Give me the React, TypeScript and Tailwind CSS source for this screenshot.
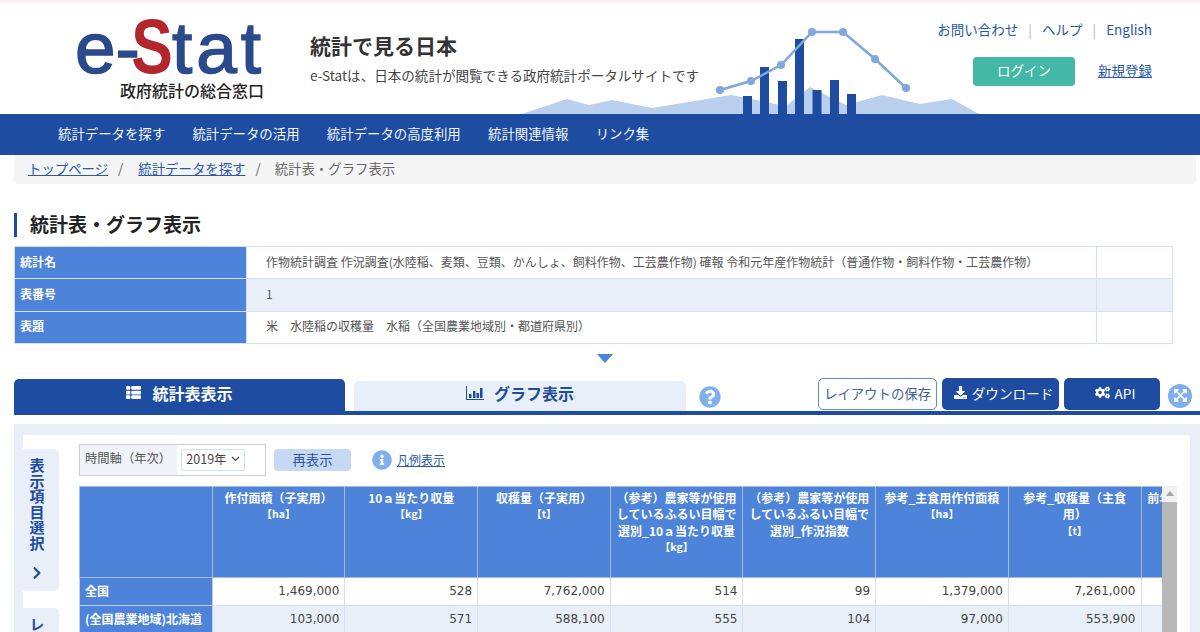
import { FaChevronRight, FaCogs, FaDownload, FaExpandArrowsAlt, FaInfoCircle, FaQuestionCircle, FaThList } from "react-icons/fa";

const headers = [
  { title: "", unit: "" },
  { title: "作付面積（子実用）", unit: "【ha】" },
  { title: "10ａ当たり収量", unit: "【kg】" },
  { title: "収穫量（子実用）", unit: "【t】" },
  { title: "（参考）農家等が使用しているふるい目幅で選別_10ａ当たり収量", unit: "【kg】" },
  { title: "（参考）農家等が使用しているふるい目幅で選別_作況指数", unit: "" },
  { title: "参考_主食用作付面積", unit: "【ha】" },
  { title: "参考_収穫量（主食用）", unit: "【t】" },
  { title: "前年産の収穫量（子実用）", unit: "" },
];

const rows = [
  { name: "全国", values: ["1,469,000", "528", "7,762,000", "514", "99", "1,379,000", "7,261,000", ""] },
  { name: "(全国農業地域)北海道", values: ["103,000", "571", "588,100", "555", "104", "97,000", "553,900", ""] },
];

const info = [
  { label: "統計名", value: "作物統計調査 作況調査(水陸稲、麦類、豆類、かんしょ、飼料作物、工芸農作物) 確報 令和元年産作物統計（普通作物・飼料作物・工芸農作物）" },
  { label: "表番号", value: "1" },
  { label: "表題", value: "米　水陸稲の収穫量　水稲（全国農業地域別・都道府県別）" },
];

const nav = ["統計データを探す", "統計データの活用", "統計データの高度利用", "統計関連情報", "リンク集"];

function HeaderChart() {
  const dots = [[720, 90], [751, 81], [781, 65], [812, 32], [843, 32], [875, 59], [906, 88]];
  const bars = [[743, 96], [760, 67], [778, 81], [795, 39], [812.5, 90], [830, 80], [847, 94]];
  return (
    <svg className="absolute left-0 top-0" width="1200" height="114" viewBox="0 0 1200 114">
      <polygon
        points="522,114 567,99 589,105 612,100 652,108 731,95 786,106 810,87 846,105 882,95 920,104 952,99 979,114"
        fill="#bacfee"
      />
      {bars.map(([x, y]) => (
        <rect key={x} x={x} y={y} width="9" height={114 - y} fill="#1e4ca1" />
      ))}
      <polyline points={dots.map((d) => d.join(",")).join(" ")} fill="none" stroke="#7ea8de" strokeWidth="2.5" />
      {dots.map(([x, y]) => (
        <circle key={x} cx={x} cy={y} r="4" fill="#7ea8de" />
      ))}
    </svg>
  );
}

function BarIcon() {
  return (
    <svg width="18" height="14" viewBox="0 0 18 14" fill="#1e4ca1">
      <rect x="0" y="0" width="1" height="14" />
      <rect x="0" y="13" width="18" height="1" />
      <rect x="3" y="8" width="2.5" height="4" />
      <rect x="7" y="5" width="2.5" height="7" />
      <rect x="10.5" y="7" width="2.5" height="5" />
      <rect x="14" y="2" width="2.5" height="10" />
    </svg>
  );
}

export default function App() {
  return (
    <div className="h-[632px] w-[1200px] overflow-hidden bg-white font-['Noto_Sans_CJK_JP',sans-serif] text-[#333]">
      <div className="h-[3px] bg-[#fdeef2]" />
      <header className="relative h-[111px]">
        <div className="absolute -top-[3px] left-0">
          <HeaderChart />
        </div>
        <div className="relative flex h-full">
          <div className="ml-[75px] w-[235px]">
            <div className="flex h-[75px] items-baseline font-['Liberation_Sans',sans-serif] leading-[86px]">
              <span className="text-[73px] text-[#2b4a8c] [-webkit-text-stroke:1.5px_#2b4a8c]">e-</span>
              <span className="ml-[-14px] inline-block scale-x-[0.8] text-[78px] font-bold text-[#b3262c]">S</span>
              <span className="ml-[-6px] text-[73px] tracking-[4px] text-[#2b4a8c] [-webkit-text-stroke:1.5px_#2b4a8c]">tat</span>
            </div>
            <p className="ml-[45px] whitespace-nowrap text-[16px] font-medium leading-[24px] text-[#222]">政府統計の総合窓口</p>
          </div>
          <div className="pt-[29px]">
            <h2 className="text-[21px] font-bold leading-[26px] text-[#333]">統計で見る日本</h2>
            <p className="mt-[7px] whitespace-nowrap text-[13.55px] leading-[20px] text-[#444]">e-Statは、日本の統計が閲覧できる政府統計ポータルサイトです</p>
          </div>
          <div className="ml-auto flex flex-col items-end pr-[48px] pt-[16px]">
            <div className="flex items-center text-[13.5px] leading-[20px] text-[#2a59a8]">
              <span>お問い合わせ</span>
              <span className="mx-[10px] text-[#b9b2a6]">|</span>
              <span>ヘルプ</span>
              <span className="mx-[10px] text-[#b9b2a6]">|</span>
              <span>English</span>
            </div>
            <div className="mt-[18px] flex items-center gap-[23px]">
              <button className="h-[29px] w-[102px] rounded-[4px] bg-[#43b8a6] pb-[2px] text-[13.5px] text-white">ログイン</button>
              <a className="pb-[2px] text-[13.5px] text-[#2a59a8] underline">新規登録</a>
            </div>
          </div>
        </div>
      </header>

      <nav className="flex h-[41px] items-center gap-[27.3px] bg-[#1e4ca1] pb-[3px] pl-[58px] text-[13.4px] text-[#f4f7fc]">
        {nav.map((item) => (
          <span key={item}>{item}</span>
        ))}
      </nav>

      <div className="mx-[14px] flex h-[29px] w-[1182px] items-center rounded-b-[4px] bg-[#f5f5f5] pb-[2px] pl-[14px] text-[13.4px]">
        <a className="text-[#2a59a8] underline">トップページ</a>
        <span className="mx-[10px] text-[#666]">/</span>
        <a className="ml-[5px] text-[#2a59a8] underline">統計データを探す</a>
        <span className="mx-[10px] text-[#666]">/</span>
        <span className="ml-[4px] text-[#666]">統計表・グラフ表示</span>
      </div>

      <h1 className="ml-[14px] mt-[29px] flex h-[24px] items-center border-l-[3px] border-[#1e4ca1] pb-[2px] pl-[13px] text-[19px] font-bold text-[#222]">
        統計表・グラフ表示
      </h1>

      <table className="ml-[14px] mt-[9px] w-[1159px] table-fixed border-collapse text-[12px]">
        <colgroup>
          <col className="w-[232px]" />
          <col className="w-[850px]" />
          <col />
        </colgroup>
        <tbody>
          {info.map((row, i) => (
            <tr key={row.label} className={`h-[32.3px] ${i === 1 ? "bg-[#e9eff8]" : "bg-white"}`}>
              <th className="border border-[#d6e0f2] bg-[#4d83d9] pb-[2px] pl-[5px] text-left font-bold text-white">{row.label}</th>
              <td className="border border-[#d6e0f2] pb-[2px] pl-[19px] text-[#555]">{row.value}</td>
              <td className="border border-[#d6e0f2]" />
            </tr>
          ))}
        </tbody>
      </table>

      <div className="flex h-[34px] justify-center pl-[10px] pt-[10px]">
        <svg width="16" height="9" viewBox="0 0 16 9">
          <polygon points="0,0 16,0 8,9" fill="#4d83d9" />
        </svg>
      </div>

      <div className="ml-[14px] flex h-[37px] items-end border-b-[4px] border-[#1e4ca1]">
        <div className="flex h-[32px] w-[331px] items-center justify-center gap-[11px] rounded-t-[5px] bg-[#1e4ca1] pb-[4px] text-[16px] font-bold text-white">
          <FaThList className="text-[15px]" />
          統計表表示
        </div>
        <div className="ml-[9px] flex h-[30px] w-[332px] items-center justify-center gap-[10px] rounded-t-[5px] bg-[#e9eff8] pb-[5px] text-[16px] font-bold text-[#1e4ca1]">
          <BarIcon />
          グラフ表示
        </div>
        <FaQuestionCircle className="mb-[3px] ml-[13px] text-[22px] text-[#7fb0ee]" />
        <div className="mb-[1px] ml-[97px] flex gap-[5px] text-[14px]">
          <button className="h-[32px] w-[119px] whitespace-nowrap rounded-[5px] border border-[#5d8fd8] bg-white pb-[2px] text-[13.4px] text-[#3f5f9f]">レイアウトの保存</button>
          <button className="flex h-[32px] w-[117px] items-center justify-center gap-[5px] whitespace-nowrap rounded-[5px] bg-[#1e4ca1] pb-[2px] pl-[6px] text-[13.6px] text-white">
            <FaDownload className="text-[13px]" />
            ダウンロード
          </button>
          <button className="flex h-[32px] w-[96px] items-center justify-center gap-[5px] rounded-[5px] bg-[#1e4ca1] pb-[2px] pl-[6px] text-[13.6px] text-white">
            <FaCogs className="text-[15px]" />
            API
          </button>
        </div>
        <div className="mb-[3px] ml-[8px] flex h-[24px] w-[24px] items-center justify-center rounded-full bg-[#7fb0ee]">
          <FaExpandArrowsAlt className="text-[15px] text-white" />
        </div>
      </div>

      <div className="ml-[14px] mt-[9px] h-[208px] bg-[#e9eff8] pl-[9px] pr-[10px] pt-[11px]">
        <div className="flex h-full bg-white">
          <div className="mr-[20px] flex w-[36px] flex-col gap-[17px] pt-[14px]">
            <div className="flex h-[142px] shrink-0 flex-col items-center rounded-r-[5px] bg-[#e9eff8] pr-[9px] pt-[9px] text-[#1e4ca1]">
              <span className="text-[15px] font-bold leading-[16px] tracking-[0.5px] [writing-mode:vertical-rl]">表示項目選択</span>
              <FaChevronRight className="mt-[15px] text-[14px]" />
            </div>
            <div className="flex h-[60px] shrink-0 flex-col items-center overflow-hidden rounded-r-[5px] bg-[#e9eff8] pr-[9px] pt-[9px] text-[#1e4ca1]">
              <span className="whitespace-nowrap text-[15px] font-bold leading-[16px] tracking-[0.5px] [writing-mode:vertical-rl]">レイアウト</span>
            </div>
          </div>

          <div className="pt-[9px]">
            <div className="flex h-[32px] items-center">
              <div className="flex h-[32px] w-[187px] border border-[#ccc]">
                <div className="flex w-[97px] items-center bg-[#f0f3fa] pb-[3px] pl-[5px] text-[12.3px] text-[#555]">時間軸（年次）</div>
                <div className="flex items-center py-[4px] pl-[4px]">
                  <div className="flex h-[22px] w-[64px] items-center justify-center gap-[4px] rounded-[2px] border border-[#cfe0f5] pb-[2px] text-[12.5px] text-[#444]">
                    2019年
                    <svg width="9" height="6" viewBox="0 0 9 6">
                      <path d="M1 1l3.5 3.5L8 1" fill="none" stroke="#444" strokeWidth="1.1" />
                    </svg>
                  </div>
                </div>
              </div>
              <button className="ml-[8px] h-[22px] w-[77px] rounded-[4px] bg-[#c5d9f5] pb-[2px] text-[13.4px] text-[#2f5597]">再表示</button>
              <FaInfoCircle className="ml-[21px] text-[20px] text-[#7fb0ee]" />
              <a className="ml-[5px] text-[12px] text-[#2a59a8] underline">凡例表示</a>
            </div>

            <div className="mt-[10px] flex">
              <div className="h-[146px] w-[1083px] overflow-hidden">
                <table className="w-[1194.3px] table-fixed border-collapse text-[12px]">
                  <colgroup>
                    {headers.map((h, i) => (
                      <col key={i} className="w-[132.7px]" />
                    ))}
                  </colgroup>
                  <thead>
                    <tr className="h-[91px]">
                      {headers.map((h, i) => (
                        <th key={i} className={`border border-[#a9bcd6] bg-[#4d83d9] pt-[3px] align-top text-[12px] font-bold leading-[16.5px] text-white ${i === 7 ? "px-[10px]" : "px-[5px]"}`}>
                          {h.title}
                          {h.unit && <div className="text-[10.5px]">{h.unit}</div>}
                        </th>
                      ))}
                    </tr>
                  </thead>
                  <tbody>
                    {rows.map((row, r) => (
                      <tr key={row.name} className={`h-[28px] ${r === 1 ? "bg-[#e9eff8]" : "bg-white"}`}>
                        <th className="whitespace-nowrap border border-[#c3cfe0] bg-[#4d83d9] pl-[5px] text-left font-bold text-white">{row.name}</th>
                        {row.values.map((v, i) => (
                          <td key={i} className="border border-[#d5e1f3] pr-[5px] text-right font-['DejaVu_Sans',sans-serif] text-[12px] text-[#444]">
                            {v}
                          </td>
                        ))}
                      </tr>
                    ))}
                  </tbody>
                </table>
              </div>
              <div className="flex h-[146px] w-[15px] flex-col bg-[#f1f1f1]">
                <div className="flex h-[16px] items-center justify-center">
                  <svg width="8" height="5" viewBox="0 0 8 5">
                    <polygon points="0,5 8,5 4,0" fill="#a3a3a3" />
                  </svg>
                </div>
                <div className="flex-1 bg-[#b8b8b8]" />
              </div>
            </div>
          </div>
        </div>
      </div>
    </div>
  );
}
